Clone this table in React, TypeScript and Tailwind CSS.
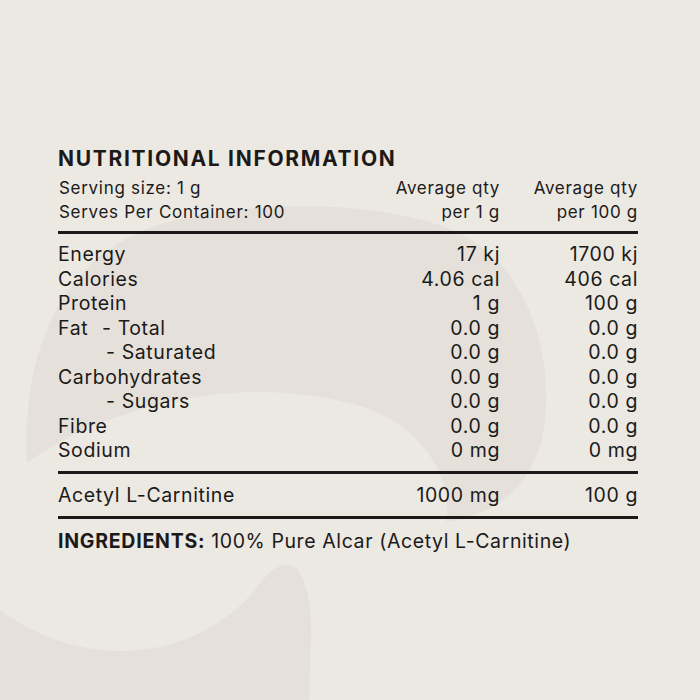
type Row = {
  label: string;
  perServe: string;
  per100: string;
  kind?: 'fat' | 'sub';
};

const rows: Row[] = [
  { label: 'Energy', perServe: '17 kj', per100: '1700 kj' },
  { label: 'Calories', perServe: '4.06 cal', per100: '406 cal' },
  { label: 'Protein', perServe: '1 g', per100: '100 g' },
  { label: '- Total', perServe: '0.0 g', per100: '0.0 g', kind: 'fat' },
  { label: '- Saturated', perServe: '0.0 g', per100: '0.0 g', kind: 'sub' },
  { label: 'Carbohydrates', perServe: '0.0 g', per100: '0.0 g' },
  { label: '- Sugars', perServe: '0.0 g', per100: '0.0 g', kind: 'sub' },
  { label: 'Fibre', perServe: '0.0 g', per100: '0.0 g' },
  { label: 'Sodium', perServe: '0 mg', per100: '0 mg' },
];

// faint brand swirl behind the panel
function Backdrop() {
  return (
    <svg
      className="absolute inset-0 h-full w-full"
      viewBox="0 0 700 700"
      aria-hidden="true"
    >
      <path
        d="M27 463 C22 360 55 270 140 232 C220 198 390 196 465 236 C528 272 552 350 545 420 C540 478 500 515 446 522 C455 478 420 420 350 403 C280 386 200 386 100 423 C70 435 45 450 27 463 Z"
        fill="#e5e1da"
      />
      <path
        d="M0 610 C40 640 90 655 140 650 C190 645 230 620 255 590 C268 572 278 563 290 565 C305 570 312 600 311 640 L309 700 L0 700 Z"
        fill="#e5e1da"
      />
    </svg>
  );
}

export default function App() {
  return (
    <div
      className="relative h-[700px] w-[700px] overflow-hidden bg-[#ece8e2] text-[#1b1a19]"
      style={{ fontFamily: 'Inter, "Liberation Sans", sans-serif' }}
    >
      <Backdrop />

      <div className="relative ml-[58px] w-[580px] pt-[147px]">
        <h1 className="text-[21px] font-bold leading-[24px] tracking-[1.7px]">
          NUTRITIONAL INFORMATION
        </h1>

        {/* serving header */}
        <div className="mt-[5px] grid grid-cols-[1fr_150px_138px] pl-[1px] text-[17px] leading-[24px] tracking-[0.7px]">
          <div>
            <p>Serving size: 1 g</p>
            <p>Serves Per Container: 100</p>
          </div>
          <div className="text-right">
            <p>Average qty</p>
            <p>per 1 g</p>
          </div>
          <div className="text-right">
            <p>Average qty</p>
            <p>per 100 g</p>
          </div>
        </div>

        <div className="mt-[7px] h-[3px] bg-[#1b1a19]" />

        <div className="py-[8px] text-[19.5px] leading-[24.5px] tracking-[0.6px]">
          {rows.map(row => (
            <div key={row.label} className="grid grid-cols-[1fr_150px_138px]">
              <span>
                {row.kind === 'fat' && (
                  <span className="inline-block w-[44px]">Fat</span>
                )}
                {row.kind === 'sub' ? (
                  <span className="pl-[48px]">{row.label}</span>
                ) : (
                  row.label
                )}
              </span>
              <span className="text-right">{row.perServe}</span>
              <span className="text-right">{row.per100}</span>
            </div>
          ))}
        </div>

        <div className="h-[3px] bg-[#1b1a19]" />

        <div className="grid grid-cols-[1fr_150px_138px] py-[9px] text-[19.5px] leading-[24.5px] tracking-[0.6px]">
          <span>Acetyl L-Carnitine</span>
          <span className="text-right">1000 mg</span>
          <span className="text-right">100 g</span>
        </div>

        <div className="h-[3px] bg-[#1b1a19]" />

        <p className="mt-[10px] text-[19.5px] leading-[24.5px] tracking-[0.6px]">
          <span className="font-bold tracking-[0.75px]">INGREDIENTS:</span> 100%
          Pure Alcar (Acetyl L-Carnitine)
        </p>
      </div>
    </div>
  );
}
